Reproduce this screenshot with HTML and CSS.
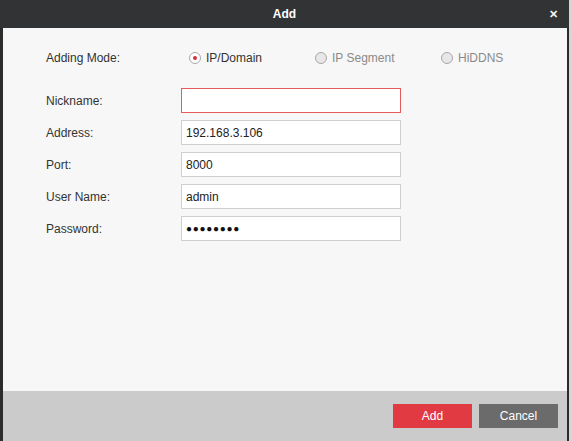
FILE: index.html
```html
<!DOCTYPE html>
<html lang="en">

<head>
    <meta charset="UTF-8">
    <title>Add</title>
    <link rel="stylesheet" href="styles.css">
</head>

<body>
    <div class="dialog">
        <div class="titleBar">
            <span></span>
            <span class="title">Add</span>
            <span class="close">&#x2715;</span>
        </div>

        <div class="dialogBody">
            <div class="row modeRow">
                <label class="rowLabel">Adding Mode:</label>
                <div class="modes">
                    <span class="mode checked"><i class="radio"></i>IP/Domain</span>
                    <span class="mode disabled"><i class="radio"></i>IP Segment</span>
                    <span class="mode disabled"><i class="radio"></i>HiDDNS</span>
                </div>
            </div>

            <div class="row">
                <label class="rowLabel">Nickname:</label>
                <input class="field error" value="">
            </div>
            <div class="row">
                <label class="rowLabel">Address:</label>
                <input class="field" value="192.168.3.106">
            </div>
            <div class="row">
                <label class="rowLabel">Port:</label>
                <input class="field" value="8000">
            </div>
            <div class="row">
                <label class="rowLabel">User Name:</label>
                <input class="field" value="admin">
            </div>
            <div class="row">
                <label class="rowLabel">Password:</label>
                <div class="field dots">&#x25CF;&#x25CF;&#x25CF;&#x25CF;&#x25CF;&#x25CF;&#x25CF;&#x25CF;</div>
            </div>
        </div>

        <div class="dialogFooter">
            <button class="btn addBtn">Add</button>
            <button class="btn cancelBtn">Cancel</button>
        </div>
    </div>
</body>

</html>
```

FILE: styles.css
```css
body {
    margin: 0;
    padding: 0;
    background-color: #d6d6d6;
    font-family: 'Liberation Sans', Arial, sans-serif;
    font-size: 12px;
    color: #333;
}

.dialog {
    width: 569px;
    height: 441px;
    display: flex;
    flex-direction: column;
    background-color: #2b2c2e;
    padding: 0 2px 0 3px;
    box-sizing: border-box;
}

.titleBar {
    height: 28px;
    flex: none;
    display: grid;
    grid-template-columns: 1fr auto 1fr;
    align-items: center;
    background-color: #323335;
    margin: 0 -2px 0 -3px;
    color: #fff;
}

.title {
    font-weight: bold;
    font-size: 12px;
}

.close {
    justify-self: end;
    margin-right: 11px;
    font-size: 11px;
    font-weight: bold;
    color: #f2f2f2;
}

.dialogBody {
    flex: 1;
    background-color: #f7f7f7;
    padding: 20px 0 0 43px;
}

.row {
    display: flex;
    align-items: center;
    height: 25px;
    margin-bottom: 7px;
}

.modeRow {
    height: 20px;
    margin-bottom: 20px;
}

.rowLabel {
    width: 135px;
    flex: none;
}

.modes {
    display: flex;
    padding-left: 8px;
}

.mode {
    display: flex;
    align-items: center;
    width: 126px;
}

.radio {
    width: 10px;
    height: 10px;
    border: 1px solid #a9a9a9;
    border-radius: 50%;
    background-color: #e8e6e6;
    margin-right: 5px;
    position: relative;
}

.checked .radio {
    background-color: #fff;
}

.checked .radio::after {
    content: "";
    position: absolute;
    left: 3px;
    top: 3px;
    width: 4px;
    height: 4px;
    border-radius: 50%;
    background-color: #d7303a;
}

.disabled {
    color: #8a8a8a;
}

.field {
    width: 220px;
    height: 25px;
    box-sizing: border-box;
    border: 1px solid #cfcfcf;
    background-color: #fff;
    padding: 0 4px;
    font-family: inherit;
    font-size: 12px;
    color: #222;
    outline: none;
}

.field.error {
    border-color: #e85a5a;
}

.dots {
    display: flex;
    align-items: center;
    font-size: 10px;
    letter-spacing: 0.7px;
    color: #111;
}

.dialogFooter {
    height: 50px;
    flex: none;
    display: flex;
    justify-content: flex-end;
    align-items: center;
    gap: 7px;
    padding-right: 9px;
    background-color: #cbcbcb;
}

.btn {
    width: 79px;
    height: 24px;
    border: none;
    color: #fff;
    font-family: inherit;
    font-size: 12px;
    cursor: pointer;
}

.addBtn {
    background-color: #e23a43;
}

.cancelBtn {
    background-color: #6b6b6b;
}
```
